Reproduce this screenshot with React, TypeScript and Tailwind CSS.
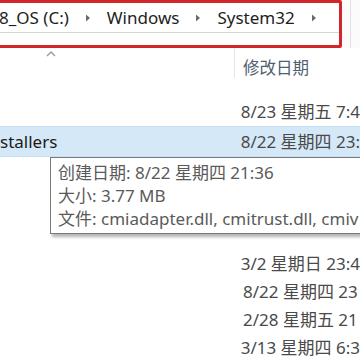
import React from 'react';

const font = { fontFamily: '"Noto Sans", "Noto Sans CJK SC", sans-serif' };

function Crumb({ children }: { children: React.ReactNode }) {
  return <span className="text-[17px] text-[#1e1e1e] leading-none">{children}</span>;
}

function Arrow() {
  return (
    <svg width="6" height="8" viewBox="0 0 6 8" className="mx-[16px]">
      <path d="M1 0.5 L5 4 L1 7.5 Z" fill="#6b6b6b" />
    </svg>
  );
}

const rowsAbove = ['8/23 星期五 7:4'];
const rowsBelow = ['3/2 星期日 23:4', '8/22 星期四 23', '2/28 星期五 21', '3/13 星期四 6:3'];

export default function App() {
  return (
    <div className="relative w-[360px] h-[360px] overflow-hidden bg-white" style={font}>
      {/* address bar */}
      <div className="flex h-[48px] bg-[#fbfbfb]">
        <div className="-ml-[6px] w-[348px] h-[48px] border-[3px] border-[#d3262b] rounded-[2px] bg-white flex flex-col">
          <div className="h-[30px] flex items-center pl-[2px] border-b border-[#d6d6d6]">
            <Crumb>8_OS (C:)</Crumb>
            <Arrow />
            <Crumb>Windows</Crumb>
            <Arrow />
            <Crumb>System32</Crumb>
            <Arrow />
          </div>
        </div>
        <div className="flex-1 border-l border-[#e3e3e3] ml-[8px]" />
      </div>

      {/* column header */}
      <div className="flex h-[40px]">
        <div className="w-[234px] relative">
          <svg width="10" height="6" viewBox="0 0 10 6" className="absolute left-[46px] top-[3px]">
            <path d="M1 5 L5 1 L9 5" stroke="#9a9a9a" strokeWidth="1.4" fill="none" />
          </svg>
        </div>
        <div className="w-px h-[30px] bg-[#e5e5e5]" />
        <div className="pl-[8px] flex items-center text-[16.5px] text-[#4f5e70] whitespace-nowrap">修改日期</div>
      </div>

      <div className="h-[10px]" />
      {rowsAbove.map((d) => (
        <div key={d} className="flex h-[28px] items-center">
          <div className="w-[243px]" />
          <span className="text-[17px] text-[#4a4a4a] whitespace-nowrap">{d}</span>
        </div>
      ))}

      {/* selected row */}
      <div className="flex h-[31px] items-center bg-[#d5e8f8] border-y border-[#c6def3]">
        <span className="w-[243px] text-[17px] text-[#1a1a1a] whitespace-nowrap">stallers</span>
        <span className="text-[17px] text-[#4a4a4a] whitespace-nowrap">8/22 星期四 23:</span>
      </div>

      <div className="h-[93px]" />
      {rowsBelow.map((d) => (
        <div key={d} className="flex h-[28px] items-center">
          <div className="w-[243px]" />
          <span className="text-[17px] text-[#4a4a4a] whitespace-nowrap">{d}</span>
        </div>
      ))}

      {/* tooltip */}
      <div className="absolute left-[50px] top-[157px] w-[340px] h-[77px] bg-white border border-[#7a7a7a] shadow-[2px_3px_3px_rgba(0,0,0,0.3)] px-[7px] pt-[3px] text-[17px] leading-[23px] text-[#5a5a5a] whitespace-nowrap">
        <div>创建日期: 8/22 星期四 21:36</div>
        <div>大小: 3.77 MB</div>
        <div>文件: cmiadapter.dll, cmitrust.dll, cmiv</div>
      </div>
    </div>
  );
}
